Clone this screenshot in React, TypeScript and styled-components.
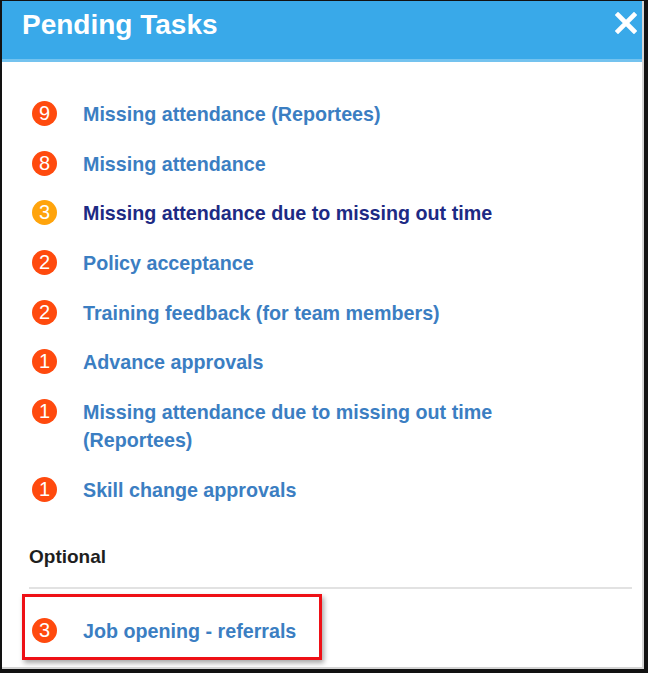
import React from 'react';
import styled, { createGlobalStyle } from 'styled-components';

const GlobalStyle = createGlobalStyle`
    html, body {
        margin: 0;
        padding: 0;
        background: #121212;
    }
    body {
        font-family: "Liberation Sans", Arial, sans-serif;
    }
`;

const Panel = styled.div`
    box-sizing: border-box;
    height: calc(100vh - 5px);
    margin: 1px 4px 4px 2px;
    background: #ffffff;
    border-right: 2px solid #d4d4d4;
    border-bottom: 2px solid #d4d4d4;
    display: flex;
    flex-direction: column;
    overflow: hidden;
`;

const Header = styled.div`
    height: 50px;
    background: #39a9e9;
    border-bottom: 3px solid #74c3ef;
    display: flex;
    justify-content: space-between;
    align-items: flex-start;
    padding: 8px 5px 0 20px;
    box-sizing: content-box;
`;

const Title = styled.h1`
    margin: 0;
    color: #ffffff;
    font-size: 28px;
    line-height: 32px;
    font-weight: bold;
`;

const CloseButton = styled.button`
    background: none;
    border: none;
    padding: 0;
    margin-top: 3px;
    width: 22px;
    height: 22px;
    cursor: pointer;
`;

const Body = styled.div`
    padding: 38px 10px 0 30px;
`;

const TaskList = styled.ul`
    list-style: none;
    margin: 0;
    padding: 0;
    display: flex;
    flex-direction: column;
    gap: 21.7px;
`;

const TaskRow = styled.li`
    display: flex;
    align-items: flex-start;
    gap: 26px;
`;

const Badge = styled.span<{ tone: 'red' | 'orange' }>`
    flex: none;
    width: 25px;
    height: 25px;
    margin-top: 1px;
    border-radius: 50%;
    background: ${({ tone }) => (tone === 'orange' ? '#ffa40c' : '#ff4a0e')};
    color: #ffffff;
    font-size: 20px;
    line-height: 25px;
    text-align: center;
`;

const TaskLink = styled.a<{ visited?: boolean }>`
    max-width: 470px;
    color: ${({ visited }) => (visited ? '#1d2a84' : '#3b7ec2')};
    font-size: 19.7px;
    line-height: 28px;
    font-weight: bold;
    text-decoration: none;
    cursor: pointer;
`;

const SectionLabel = styled.div`
    margin: 39px 0 0 -3px;
    color: #1e1e1e;
    font-size: 19px;
    line-height: 28px;
    font-weight: bold;
`;

const Divider = styled.hr`
    margin: 16px 0 0 -3px;
    border: none;
    border-top: 2px solid #e2e2e2;
`;

const Highlight = styled.div`
    margin: 5px 0 0 -10px;
    width: 300px;
    box-sizing: border-box;
    border: 3px solid #ee1016;
    box-shadow: 2px 3px 5px rgba(0, 0, 0, 0.35);
    padding: 20px 0 12px 7px;
`;

type Task = { count: number; label: string; tone?: 'red' | 'orange'; visited?: boolean };

const tasks: Task[] = [
    { count: 9, label: 'Missing attendance (Reportees)' },
    { count: 8, label: 'Missing attendance' },
    { count: 3, label: 'Missing attendance due to missing out time', tone: 'orange', visited: true },
    { count: 2, label: 'Policy acceptance' },
    { count: 2, label: 'Training feedback (for team members)' },
    { count: 1, label: 'Advance approvals' },
    { count: 1, label: 'Missing attendance due to missing out time (Reportees)' },
    { count: 1, label: 'Skill change approvals' },
];

export default function App() {
    return (
        <>
            <GlobalStyle />
            <Panel>
                <Header>
                    <Title>Pending Tasks</Title>
                    <CloseButton aria-label="Close">
                        <svg width="22" height="22" viewBox="0 0 22 22">
                            <path d="M3 3 L19 19 M19 3 L3 19" stroke="#ffffff" strokeWidth="4.6" strokeLinecap="square" />
                        </svg>
                    </CloseButton>
                </Header>

                <Body>
                    <TaskList>
                        {tasks.map((task, i) => (
                            <TaskRow key={i}>
                                <Badge tone={task.tone ?? 'red'}>{task.count}</Badge>
                                <TaskLink visited={task.visited}>{task.label}</TaskLink>
                            </TaskRow>
                        ))}
                    </TaskList>

                    <SectionLabel>Optional</SectionLabel>
                    <Divider />

                    <Highlight>
                        <TaskRow>
                            <Badge tone="red">3</Badge>
                            <TaskLink>Job opening - referrals</TaskLink>
                        </TaskRow>
                    </Highlight>
                </Body>
            </Panel>
        </>
    );
}
